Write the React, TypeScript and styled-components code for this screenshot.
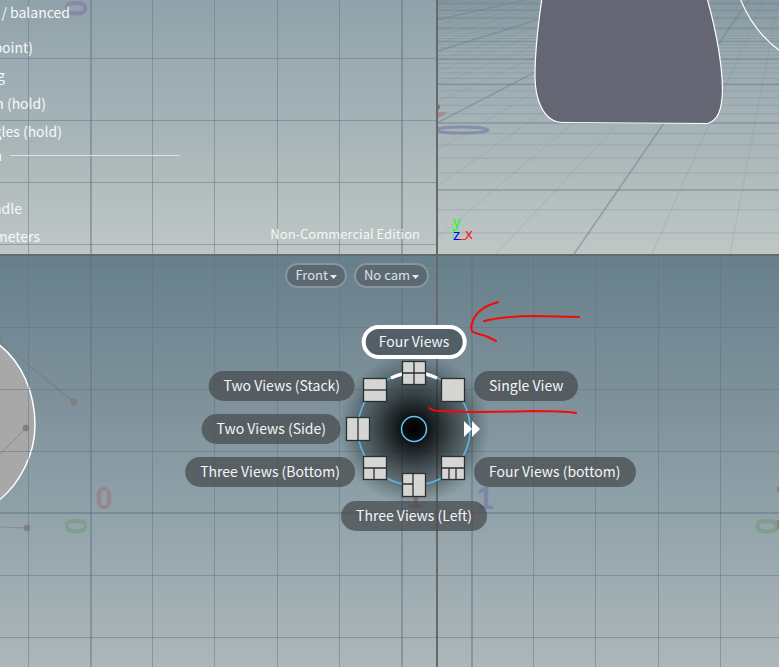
import React from "react";
import styled, { createGlobalStyle, css } from "styled-components";

const GlobalStyle = createGlobalStyle`
  *, *::before, *::after { box-sizing: border-box; }
  body { margin: 0; font-family: "Noto Sans CJK SC", "Noto Sans", sans-serif; }
  button { font: inherit; cursor: pointer; }
`;

const Workspace = styled.main`
  position: relative;
  display: grid;
  grid-template-columns: 436fr 341fr;
  grid-template-rows: 254fr 411fr;
  gap: 2px;
  height: 100vh;
  overflow: hidden;
  background: #686868;
`;

const Viewport = styled.section<{ $tone: "light" | "deep" }>`
  position: relative;
  min-width: 0;
  min-height: 0;
  overflow: hidden;
  display: flex;
  flex-direction: column;
  background: ${({ $tone }) =>
    $tone === "light"
      ? "linear-gradient(#90a2aa 0%, #a4b2b7 46%, #b1bcbc 72%, #bfc7c6 100%)"
      : "linear-gradient(#67808c 0%, #80939c 38%, #8fa1a8 60%, #adb7ba 100%)"};
`;

const Scene = styled.svg`
  position: absolute;
  inset: 0;
  width: 100%;
  height: 100%;
`;

const Hints = styled.ul`
  position: relative;
  list-style: none;
  margin: 0;
  padding: 0;
  color: #f6f9fa;
  font-size: 14px;
`;

const Hint = styled.li<{ $end: number; $gap?: number; $height?: number }>`
  display: flex;
  align-items: center;
  justify-content: flex-end;
  width: ${({ $end }) => $end}px;
  height: ${({ $height }) => $height ?? 28}px;
  margin-top: ${({ $gap }) => $gap ?? 0}px;
  white-space: nowrap;
`;

const HintHeading = styled.li`
  display: flex;
  align-items: center;
  gap: 8px;
  width: 180px;
  height: 20px;
  font-weight: 500;

  span {
    display: flex;
    justify-content: flex-end;
    width: 2px;
  }

  &::after {
    content: "";
    flex: 1;
    height: 1px;
    background: #dbe2e3;
  }
`;

const Edition = styled.p`
  position: absolute;
  right: 16px;
  bottom: 10px;
  margin: 0;
  color: #f4f7f7;
  font-size: 13px;
  line-height: 20px;
`;

const ViewControls = styled.nav`
  position: relative;
  display: flex;
  justify-content: flex-end;
  gap: 7px;
  padding: 7px 7px 0;
`;

const ControlButton = styled.button`
  display: flex;
  align-items: center;
  gap: 2px;
  height: 25px;
  padding: 0 8px 2px;
  border: 2px solid #8b959b;
  border-radius: 13px;
  background: #5b6a72;
  color: #dce1e4;
  font-size: 13px;
  line-height: 20px;

  svg { margin-top: 4px; }
`;

const RadialMenu = styled.div`
  position: absolute;
  left: 414px;
  top: 429px;
`;

const Dial = styled.svg`
  position: absolute;
  left: -80px;
  top: -80px;
`;

type Side = "left" | "right" | "center";

const anchor = {
  left: css`transform: translate(-100%, -50%);`,
  right: css`transform: translate(0, -50%);`,
  center: css`transform: translate(-50%, -50%);`,
};

const MenuButton = styled.button<{ $x: number; $y: number; $side: Side; $active?: boolean }>`
  position: absolute;
  left: ${({ $x }) => $x}px;
  top: ${({ $y }) => $y}px;
  ${({ $side }) => anchor[$side]}
  height: ${({ $active }) => ($active ? 34 : 30)}px;
  padding: ${({ $active }) => ($active ? "0 13px 2px" : "0 15px 2px")};
  border: ${({ $active }) => ($active ? "4px solid #fff" : "0")};
  border-radius: 17px;
  background: ${({ $active }) => ($active ? "#525f67" : "rgba(70, 74, 76, 0.72)")};
  color: #f3f5f6;
  font-size: 14px;
  line-height: 22px;
  white-space: nowrap;
`;

const Annotation = styled.svg`
  position: absolute;
  inset: 0;
  width: 100%;
  height: 100%;
  pointer-events: none;
`;

type GridProps = {
  width: number;
  height: number;
  majorX: number;
  majorY: number;
  minorY: number;
  color: string;
  children?: React.ReactNode;
};

function OrthoScene({ width, height, majorX, majorY, minorY, color, children }: GridProps) {
  const steps = Array.from({ length: 19 }, (_, i) => i - 9);
  return (
    <Scene viewBox={`0 0 ${width} ${height}`} preserveAspectRatio="xMinYMin slice" aria-hidden="true">
      {children}
      <g fill={color}>
        {steps.map((k) => (
          <rect key={`v${k}`} x={Math.round(majorX + k * 62.2)} y={0} width={k % 5 ? 1 : 2} height={height} />
        ))}
        {steps.map((k) => (
          <rect key={`h${k}`} x={0} y={(k % 5 ? minorY : majorY) + k * 62} width={width} height={k % 5 ? 1 : 2} />
        ))}
      </g>
    </Scene>
  );
}

type AxisNumberProps = { value: number; x: number; y: number; color: string; turned?: boolean };

function AxisNumber({ value, x, y, color, turned }: AxisNumberProps) {
  return (
    <text
      transform={`translate(${x} ${y})${turned ? " rotate(-90)" : ""}`}
      y={11}
      textAnchor="middle"
      fontFamily="Liberation Sans"
      fontWeight="700"
      fontSize="31"
      fill={color}
    >
      {value}
    </text>
  );
}

function PerspectiveScene() {
  const rows = Array.from({ length: 46 }, (_, i) => i - 2);
  const rays = Array.from({ length: 46 }, (_, i) => i - 36);
  return (
    <Scene viewBox="438 0 341 254" preserveAspectRatio="xMinYMin slice" aria-hidden="true">
      <g stroke="#73858f">
        {rows.map((i) => {
          const y = -60 + 1 / (0.004 + i * 0.0002928);
          return <path key={i} d={`M438 ${y}H779`} strokeOpacity={i % 5 ? 0.3 : 0.65} strokeWidth={i % 5 ? 1 : 1.6} />;
        })}
        {rays.map((k) => {
          const major = k % 5 === 0;
          return (
            <path
              key={k}
              d={`M790 -60L${574 + 78 * k} 254`}
              strokeOpacity={major ? 0.55 : 0.22}
              strokeWidth={major ? 1.7 : 1}
            />
          );
        })}
      </g>
      <circle cx="437" cy="107" r="3" fill="#77787c" />
      <path d="M438 112L447 112L444 115L438 118Z" fill="#a68b90" />
      <ellipse cx="462" cy="130" rx="26" ry="3" fill="none" stroke="#858eaa" strokeWidth="3" />
      <path
        d="M542 -2C537 32 535 58 535 76C535 97 542 122 563 122.500L708 123.500C717 120 722 112 722.500 90C722 60 714 23 707 -2Z"
        fill="#656673"
        stroke="#fff"
        strokeWidth="1.200"
      />
      <path d="M740 -2C748 19 761 37 780 51" fill="none" stroke="#fff" strokeWidth="1.200" />
      <path d="M453.500 227V240" stroke="#38ff38" />
      <path d="M459 239.500H466" stroke="#ff2a2a" />
      <g fontFamily="Noto Sans" fontSize="15">
        <text x="453" y="227" fill="#12ff12">y</text>
        <text x="453" y="240" fill="#0000ff">z</text>
        <text x="465" y="239" fill="#ff1414">x</text>
      </g>
    </Scene>
  );
}

const tiles = [
  { x: 80, y: 24, cuts: "M12 0V24M0 12H24" },
  { x: 41, y: 41, cuts: "M0 12H24" },
  { x: 119, y: 41, cuts: "" },
  { x: 24, y: 80, cuts: "M12 0V24" },
  { x: 41, y: 119, cuts: "M0 12H24M11 12V24" },
  { x: 119, y: 119, cuts: "M0 12H24M8 12V24M15 12V24" },
  { x: 80, y: 136, cuts: "M11 0V24M0 11H11" },
];

const items: { label: string; x: number; y: number; side: Side; active?: boolean }[] = [
  { label: "Four Views", x: 0, y: -87, side: "center", active: true },
  { label: "Single View", x: 60, y: -43, side: "right" },
  { label: "Four Views (bottom)", x: 60, y: 43, side: "right" },
  { label: "Three Views (Left)", x: 0, y: 87, side: "center" },
  { label: "Three Views (Bottom)", x: -59, y: 43, side: "left" },
  { label: "Two Views (Side)", x: -73, y: 0, side: "left" },
  { label: "Two Views (Stack)", x: -59, y: -43, side: "left" },
];

function ViewDial() {
  return (
    <Dial width="160" height="160" aria-hidden="true">
      <defs>
        <radialGradient id="dial-shade">
          <stop offset="0" stopColor="#000" />
          <stop offset="0.150" stopColor="#050708" stopOpacity="0.950" />
          <stop offset="0.400" stopColor="#101416" stopOpacity="0.720" />
          <stop offset="0.750" stopColor="#202a2e" stopOpacity="0.380" />
          <stop offset="1" stopColor="#303a3e" stopOpacity="0" />
        </radialGradient>
      </defs>
      <circle cx="80" cy="80" r="76" fill="url(#dial-shade)" />
      <circle cx="80" cy="80" r="56" fill="none" stroke="#5bb9e6" strokeWidth="1.500" />
      <path d="M57 29A56 56 0 0 1 103 29" fill="none" stroke="#fff" strokeWidth="3.500" />
      <circle cx="80" cy="80" r="12.500" fill="none" stroke="#62c4f2" strokeWidth="1.500" />
      {tiles.map((t) => (
        <g key={`${t.x}-${t.y}`} transform={`translate(${t.x - 12} ${t.y - 12})`} stroke="#2a2f31" strokeWidth="1.300">
          <rect x="0.500" y="0.500" width="23" height="23" fill="#d5d6d4" />
          {t.cuts && <path d={t.cuts} fill="none" />}
        </g>
      ))}
      <path d="M130 72L138 80L130 88ZM138 72L146 80L138 88Z" fill="#fff" />
    </Dial>
  );
}

function Caret() {
  return (
    <svg width="7" height="4" aria-hidden="true">
      <path d="M0 0H7L3.500 4Z" fill="#e6eaec" />
    </svg>
  );
}

export default function App() {
  return (
    <>
      <GlobalStyle />
      <Workspace>
        <Viewport $tone="light" aria-label="Top view">
          <OrthoScene width={436} height={254} majorX={90} majorY={-4} minorY={-4} color="rgba(102, 121, 134, 0.52)">
            <AxisNumber value={0} x={76} y={8} color="#858aa6" turned />
          </OrthoScene>
          <Hints>
            <Hint $end={70} $height={24}>n / balanced</Hint>
            <Hint $end={33} $gap={9}>point)</Hint>
            <Hint $end={5}>g</Hint>
            <Hint $end={46}>n (hold)</Hint>
            <Hint $end={62}>gles (hold)</Hint>
            <HintHeading><span>n</span></HintHeading>
            <Hint $end={22} $gap={29}>ndle</Hint>
            <Hint $end={40}>meters</Hint>
          </Hints>
          <Edition>Non-Commercial Edition</Edition>
        </Viewport>

        <Viewport $tone="light" aria-label="Perspective view">
          <PerspectiveScene />
        </Viewport>

        <Viewport $tone="deep" aria-label="Front view">
          <OrthoScene width={436} height={411} majorX={90} majorY={256} minorY={257} color="rgba(97, 115, 127, 0.48)">
            <path d="M-2 88C22 106 35 137 35 169C35 198 20 228 -2 245Z" fill="#a8a8a8" stroke="#fff" strokeWidth="1.500" />
            <g stroke="#7e8081" fill="#808080">
              <path d="M0 86L74 146" strokeWidth="1.300" />
              <path d="M26 172L0 198M27 272L0 271" strokeDasharray="2 1" />
              <circle cx="0" cy="84" r="2" stroke="none" />
              <circle cx="74" cy="146" r="3" />
              <circle cx="26" cy="172" r="3" />
              <circle cx="27" cy="272" r="3" />
            </g>
            <AxisNumber value={0} x={104} y={242} color="#96868d" />
            <AxisNumber value={0} x={76} y={270} color="#7f9e8c" turned />
            <AxisNumber value={1} x={415} y={241} color="#96727a" />
          </OrthoScene>
          <ViewControls>
            <ControlButton type="button">Front<Caret /></ControlButton>
            <ControlButton type="button">No cam<Caret /></ControlButton>
          </ViewControls>
        </Viewport>

        <Viewport $tone="deep" aria-label="Right view">
          <OrthoScene width={341} height={411} majorX={33} majorY={256} minorY={257} color="rgba(97, 115, 127, 0.48)">
            <AxisNumber value={1} x={47} y={242} color="#7c86a5" />
            <AxisNumber value={0} x={329} y={270} color="#7f9e8c" turned />
            <path d="M340 83V87M340 231V236M340 264V273" stroke="#937a80" strokeWidth="2" />
          </OrthoScene>
        </Viewport>

        <RadialMenu role="group" aria-label="View layout">
          <ViewDial />
          {items.map((item) => (
            <MenuButton key={item.label} type="button" $x={item.x} $y={item.y} $side={item.side} $active={item.active}>
              {item.label}
            </MenuButton>
          ))}
        </RadialMenu>

        <Annotation aria-hidden="true">
          <g fill="none" stroke="#f80808" strokeWidth="2" strokeLinecap="round" strokeLinejoin="round">
            <path d="M498 302C488 305 480 309 476 315C472 321 470 328 472 331C475 334 481 334 488 337L496 341" />
            <path d="M484 321C500 317 515 316 535 316L579 317" />
            <path d="M429 408C433 411 437 411 445 411C475 413 500 412 530 411C550 411 565 411 576 413" />
          </g>
        </Annotation>
      </Workspace>
    </>
  );
}
